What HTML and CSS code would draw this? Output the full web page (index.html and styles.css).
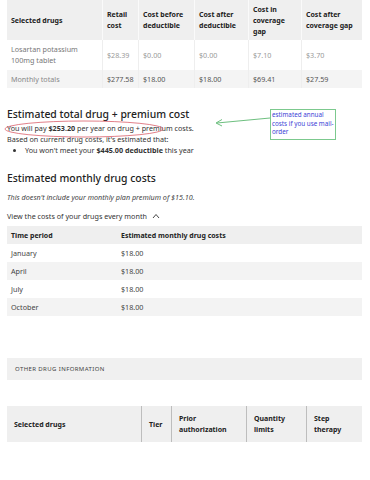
FILE: index.html
```html
<!DOCTYPE html>
<html lang="en">
<head>
    <meta charset="UTF-8">
    <title>Drug costs</title>
    <link rel="stylesheet" href="styles.css">
</head>
<body>
    <div class="page">
        <table class="costs">
            <thead>
                <tr>
                    <th class="c-drug">Selected drugs</th>
                    <th class="c-retail">Retail cost</th>
                    <th class="c-before">Cost before deductible</th>
                    <th class="c-after">Cost after deductible</th>
                    <th class="c-gap">Cost in coverage gap</th>
                    <th>Cost after coverage gap</th>
                </tr>
            </thead>
            <tbody>
                <tr class="drug-row">
                    <td class="name">Losartan potassium 100mg tablet</td>
                    <td>$28.39</td>
                    <td>$0.00</td>
                    <td>$0.00</td>
                    <td>$7.10</td>
                    <td>$3.70</td>
                </tr>
                <tr class="total-row">
                    <td class="name">Monthly totals</td>
                    <td>$277.58</td>
                    <td>$18.00</td>
                    <td>$18.00</td>
                    <td>$69.41</td>
                    <td>$27.59</td>
                </tr>
            </tbody>
        </table>

        <section class="summary">
            <h2>Estimated total drug + premium cost</h2>
            <p>You will pay <b>$253.20</b> per year on drug + premium costs.</p>
            <p>Based on current drug costs, it's estimated that:</p>
            <ul>
                <li>You won't meet your <b>$445.00 deductible</b> this year</li>
            </ul>

            <svg class="markup" width="370" height="50" viewBox="0 0 370 50">
                <ellipse cx="84" cy="21" rx="79" ry="8" fill="none" stroke="#d9606b" stroke-width="0.8"/>
                <path d="M270 10 L217 15" stroke="#5cb870" stroke-width="0.9" fill="none"/>
                <path d="M222 11.5 L216 15 L222 18" stroke="#5cb870" stroke-width="0.9" fill="none"/>
            </svg>
            <div class="note">estimated annual costs if you use mail-order</div>
        </section>

        <section class="monthly">
            <h2>Estimated monthly drug costs</h2>
            <p class="hint">This doesn't include your monthly plan premium of $15.10.</p>
            <div class="toggle">
                View the costs of your drugs every month
                <svg width="8" height="6" viewBox="0 0 8 6"><path d="M1 5 L4 1.5 L7 5" fill="none" stroke="#333" stroke-width="0.9"/></svg>
            </div>
            <table class="months">
                <thead>
                    <tr><th class="m-period">Time period</th><th>Estimated monthly drug costs</th></tr>
                </thead>
                <tbody>
                    <tr><td>January</td><td>$18.00</td></tr>
                    <tr><td>April</td><td>$18.00</td></tr>
                    <tr><td>July</td><td>$18.00</td></tr>
                    <tr><td>October</td><td>$18.00</td></tr>
                </tbody>
            </table>
        </section>

        <div class="bar">OTHER DRUG INFORMATION</div>

        <table class="other">
            <thead>
                <tr>
                    <th class="o-drug">Selected drugs</th>
                    <th class="o-tier">Tier</th>
                    <th class="o-prior">Prior authorization</th>
                    <th class="o-qty">Quantity limits</th>
                    <th>Step therapy</th>
                </tr>
            </thead>
        </table>
    </div>
</body>
</html>
```

FILE: styles.css
```css
body {
    margin: 0;
    background: #fff;
    font-family: "Noto Sans", "DejaVu Sans", sans-serif;
    color: #333;
}

.page {
    padding: 0 8px 0 7px;
}

table {
    width: 100%;
    border-collapse: collapse;
    table-layout: fixed;
    font-size: 7.2px;
}

th {
    text-align: left;
    font-weight: 700;
    font-size: 7px;
    color: #222;
    background: #efefef;
}

/* top cost table */
.costs th {
    height: 40px;
    padding: 0 3px 0 4px;
    line-height: 11px;
    border-left: 1px solid #fafafa;
}

.costs th:first-child,
.costs td:first-child {
    border-left: none;
}

.costs td {
    padding: 0 4px;
    border-left: 1px solid #eeeeee;
    color: #999;
    line-height: 11px;
}

.costs .name {
    color: #777;
}

.c-drug { width: 88px; }
.c-retail { width: 28px; }
.c-before { width: 48px; }
.c-after { width: 46px; }
.c-gap { width: 45px; }

.drug-row td {
    height: 30px;
}

.total-row td {
    height: 18px;
    background: #f4f4f4;
    color: #555;
}

.total-row .name {
    color: #888;
}

/* summary */
.summary {
    position: relative;
    margin-top: 20px;
}

h2 {
    margin: 0;
    font-size: 10.4px;
    font-weight: 500;
    color: #222;
    line-height: 12px;
}

.summary p {
    margin: 0;
    font-size: 7.2px;
    line-height: 11px;
    color: #333;
}

.summary h2 {
    margin-bottom: 3px;
}

.summary ul {
    margin: 0;
    padding-left: 18px;
    font-size: 7.2px;
    line-height: 11px;
    color: #333;
}

.markup {
    position: absolute;
    left: -7px;
    top: 0;
}

.note {
    position: absolute;
    left: 263px;
    top: 1px;
    width: 62px;
    padding: 1px 1px 2px 1px;
    border: 1px solid #7cc98e;
    color: #3b3fd6;
    font-size: 6.3px;
    line-height: 8.5px;
}

/* monthly costs */
.monthly {
    margin-top: 16px;
}

.hint {
    margin: 8px 0 0;
    font-size: 7.2px;
    font-style: italic;
    color: #444;
}

.toggle {
    display: flex;
    align-items: center;
    gap: 5px;
    margin-top: 9px;
    font-size: 7.2px;
    color: #333;
}

.months {
    margin-top: 5px;
}

.months th,
.months td {
    height: 18px;
    padding: 0 4px;
}

.months td {
    color: #444;
}

.m-period {
    width: 102px;
}

.months tbody tr:nth-child(even) td {
    background: #f3f3f3;
}

/* other drug info */
.bar {
    margin-top: 42px;
    height: 22px;
    display: flex;
    align-items: center;
    padding-left: 8px;
    background: #f0f0f0;
    font-size: 6px;
    letter-spacing: 0.4px;
    color: #444;
}

.other {
    margin-top: 26px;
}

.other th {
    height: 36px;
    padding: 0 7px;
    line-height: 11px;
    border-left: 1px solid #bdbdbd;
}

.other th:first-child {
    border-left: none;
}

.o-drug { width: 120px; }
.o-tier { width: 15px; }
.o-prior { width: 60px; }
.o-qty { width: 45px; }
```
